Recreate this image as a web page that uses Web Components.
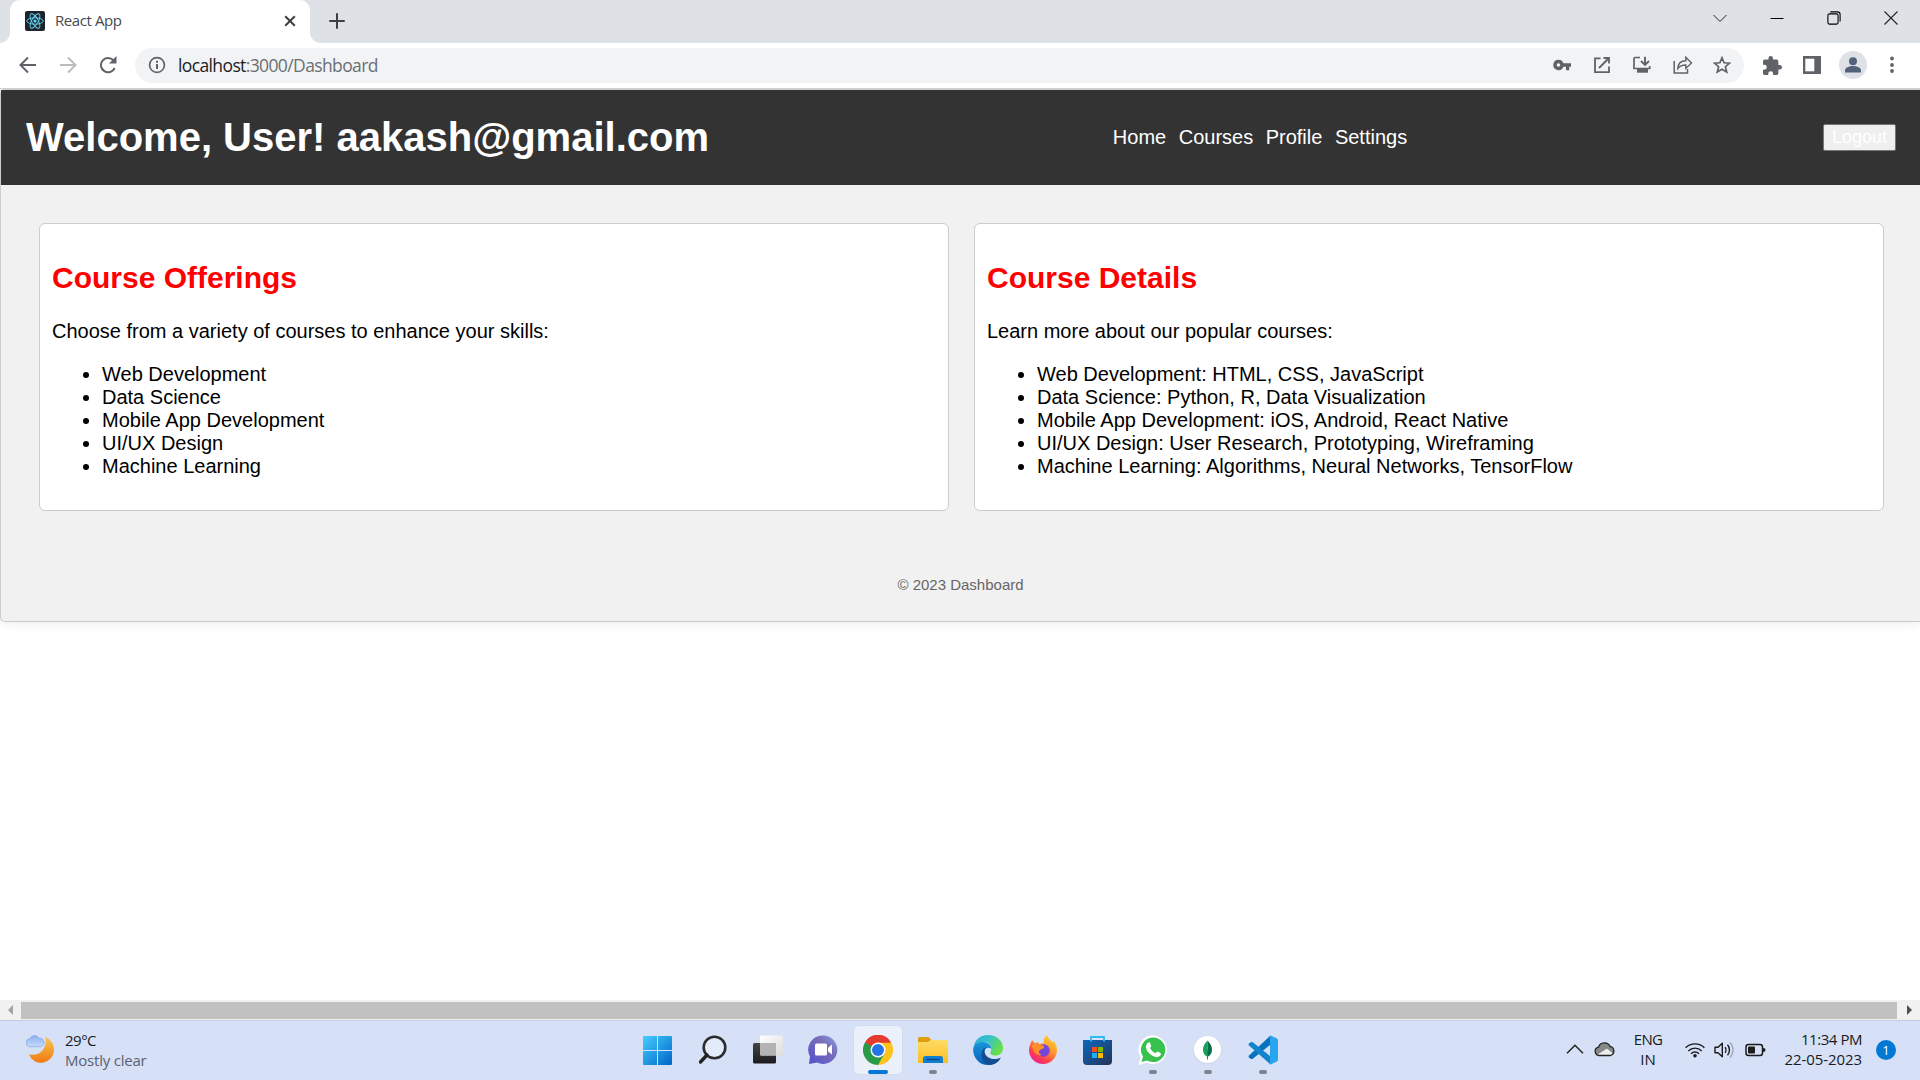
<!DOCTYPE html>
<html lang="en"><head><meta charset="utf-8"><title>React App</title>
<style>
html,body{margin:0;height:1080px;overflow:hidden;background:#fff}
body{font-family:"Liberation Sans",Arial,sans-serif}
</style></head><body>
<desktop-screen></desktop-screen>
<script>
const define=(name,css,html)=>customElements.define(name,class extends HTMLElement{
  constructor(){super();const t=document.createElement('template');
    t.innerHTML=`<style>*{box-sizing:border-box}${css}</style>${html}`;
    this.attachShadow({mode:'open'}).append(t.content.cloneNode(true));}
});

/* fixed-width text whose spacing is tuned per instance */
define('ui-text',`:host{display:block;white-space:nowrap;font-family:"Open Sans","Noto Sans",sans-serif}`,`<slot></slot>`);

const icons={
react:['0 0 20 20',20,20,`<rect width="20" height="20" rx="2" fill="#20232a"/><g fill="none" stroke="#61dafb" stroke-width=".9"><ellipse cx="10" cy="10" rx="8.2" ry="3.2"/><ellipse cx="10" cy="10" rx="8.2" ry="3.2" transform="rotate(60 10 10)"/><ellipse cx="10" cy="10" rx="8.2" ry="3.2" transform="rotate(120 10 10)"/></g><circle cx="10" cy="10" r="1.6" fill="#61dafb"/>`],
x:['0 0 12 12',12,12,`<path d="M1.2 1.2l9.6 9.6M10.8 1.2l-9.6 9.6" stroke="#3c4043" stroke-width="2"/>`],
plus:['0 0 16 16',16,16,`<path d="M8 1v14M1 8h14" stroke="#3c4043" stroke-width="2" stroke-linecap="round"/>`],
down:['0 0 14 14',14,14,`<path d="M.5 4L7 10.5 13.5 4" fill="none" stroke="#222" stroke-width="1"/>`],
min:['0 0 14 14',14,14,`<path d="M.5 7.5h13" stroke="#000"/>`],
max:['0 0 14 14',14,14,`<rect x=".9" y="2.9" width="10.2" height="10.2" rx="1.6" fill="none" stroke="#000" stroke-width="1.1"/><path d="M3.3.9h7.2a2.6 2.6 0 0 1 2.6 2.6v7" fill="none" stroke="#000" stroke-width="1.1"/>`],
close:['0 0 14 14',14,14,`<path d="M.5.5l13 13M13.5.5l-13 13" stroke="#222" stroke-width="1.1"/>`],
back:['0 0 18 18',18,18,`<path d="M17 9H2M9 1.5L1.5 9 9 16.5" fill="none" stroke="#5f6368" stroke-width="2"/>`],
fwd:['0 0 18 18',18,18,`<path d="M1 9h15M9 1.5L16.5 9 9 16.5" fill="none" stroke="#babcbe" stroke-width="2"/>`],
reload:['0 0 18 18',18,18,`<path d="M15.7 12A7.2 7.2 0 1 1 14.4 4.2" fill="none" stroke="#5f6368" stroke-width="2"/><path d="M17.5 0v7.5H10z" fill="#5f6368"/>`],
info:['0 0 18 18',18,18,`<circle cx="9" cy="9" r="7.4" fill="none" stroke="#5f6368" stroke-width="1.7"/><path d="M8 8h2v5H8zM8 4.8h2v2H8z" fill="#5f6368"/>`],
key:['0 0 18 12',18,12,`<path d="M5.5.8a5.2 5.2 0 1 0 4.9 7H13v3.4h3.2V7.8H18V4.2h-7.6A5.2 5.2 0 0 0 5.5.8zm0 3.4a1.8 1.8 0 1 1 0 3.6 1.8 1.8 0 0 1 0-3.6z" fill="#5f6368"/>`],
open:['0 0 16 16',16,16,`<path d="M6.5 1.3H1v13.9h14V9.5M9.5 1H15v5.5M15 1L5 11" fill="none" stroke="#5f6368" stroke-width="1.8"/>`],
install:['0 0 18 18',18,18,`<path d="M7 1.500H2.200A1.200 1.200 0 0 0 1 2.700v9.800h15.700V10" fill="none" stroke="#5f6368" stroke-width="1.700"/><path d="M12 .8V8M8 5l4 4 4-4" fill="none" stroke="#5f6368" stroke-width="1.9"/><path d="M4 13h11v3.7H4z" fill="#5f6368"/>`],
share:['0 0 20 18',20,18,`<path d="M1.2 5v12h13.3v-4" fill="none" stroke="#5f6368" stroke-width="1.5"/><path d="M4.8 12.5c.3-5 3.5-7.7 8-7.7V1.2L18.5 7l-5.7 5.4V9c-3.5 0-6 .8-8 3.5z" fill="none" stroke="#5f6368" stroke-width="1.4"/>`],
star:['0 0 18 18',18,18,`<path d="M9 1.8l2.1 5 5.4.4-4.1 3.5 1.3 5.3L9 13.2 4.3 16l1.3-5.3L1.5 7.2l5.4-.4z" fill="none" stroke="#5f6368" stroke-width="1.7"/>`],
puzzle:['2 1 21 21',19,19,`<path d="M20.5 11H19V7a2 2 0 0 0-2-2h-4V3.5a2.5 2.5 0 0 0-5 0V5H4a2 2 0 0 0-2 2v3.8h1.5a2.7 2.7 0 0 1 0 5.4H2V20c0 1.100.9 2 2 2h3.800v-1.500a2.700 2.700 0 0 1 5.400 0V22H17a2 2 0 0 0 2-2v-4h1.500a2.500 2.500 0 0 0 0-5z" fill="#5f6368"/>`],
panel:['0 0 18 18',18,18,`<path d="M0 0h18v18H0z" fill="#5f6368"/><path d="M2.300 2.700h9v12.600h-9z" fill="#fff"/>`],
avatar:['0 0 28 28',28,28,`<circle cx="14" cy="14" r="14" fill="#dee1e6"/><circle cx="14" cy="10.200" r="4" fill="#54617a"/><path d="M6 21.500v-2c0-3 4-4.500 8-4.500s8 1.500 8 4.500v2z" fill="#54617a"/>`],
dots:['0 0 4 18',4,18,`<g fill="#5f6368"><circle cx="2" cy="2.500" r="1.900"/><circle cx="2" cy="9" r="1.900"/><circle cx="2" cy="15" r="1.900"/></g>`],
moon:['0 0 30 30',30,30,`<defs><linearGradient id="m" x2="0" y2="1"><stop stop-color="#f9c650"/><stop offset="1" stop-color="#f07a12"/></linearGradient><linearGradient id="c" x2="0" y2="1"><stop stop-color="#8bb0ee"/><stop offset="1" stop-color="#c6dbfa"/></linearGradient></defs><path d="M19.500 2C24.500 4 28 9 28 14.500A13 13 0 0 1 2.800 19.300C13 22 21.500 14 19.500 2z" fill="url(#m)"/><path d="M4.500 11.700a4 4 0 0 1-.5-8A5 5 0 0 1 13 3.200 4.300 4.300 0 0 1 14.500 11.700z" fill="url(#c)" stroke="#7fa4e3" stroke-width=".7"/>`],
win:['0 0 30 30',30,30,`<defs><linearGradient id="w" gradientUnits="userSpaceOnUse" x2="29" y2="29"><stop stop-color="#48d0ff"/><stop offset="1" stop-color="#0067c8"/></linearGradient></defs><path d="M1 1h13v14H0V2a1 1 0 0 1 1-1zM15 1h13a1 1 0 0 1 1 1v13H15zM0 16h14v14H1a1 1 0 0 1-1-1zM15 16h14v13a1 1 0 0 1-1 1H15z" fill="url(#w)"/>`],
search:['0 0 30 30',30,30,`<circle cx="16.500" cy="12.500" r="10.800" fill="#eef2fb" fill-opacity=".55" stroke="#2b2b2b" stroke-width="2.600"/><path d="M9 20l-6.500 7" stroke="#222" stroke-width="3.400" stroke-linecap="round"/>`],
task:['0 0 30 30',30,30,`<defs><linearGradient id="t" x2="0" y2="1"><stop stop-color="#454545"/><stop offset="1" stop-color="#1b1b1b"/></linearGradient><linearGradient id="u" x2="1" y2="1"><stop stop-color="#fff"/><stop offset="1" stop-color="#dcdcdc"/></linearGradient></defs><rect y="8" width="23" height="20.500" rx="1.500" fill="url(#t)"/><rect x="7" y=".5" width="23" height="20" rx="1.500" fill="url(#u)"/><path d="M7 8h16v12.500H8.500A1.500 1.500 0 0 1 7 19z" fill="#b3b3b3"/>`],
chat:['0 0 30 30',30,30,`<defs><linearGradient id="h" x1="1" x2="0" y2="1"><stop stop-color="#83a8f3"/><stop offset=".35" stop-color="#7b6fb8"/><stop offset="1" stop-color="#5451cc"/></linearGradient></defs><path d="M15 .5a14.200 14.200 0 1 1-6 27L1 29l1-7.500A14.200 14.200 0 0 1 15 .5z" fill="url(#h)"/><rect x="7" y="8.500" width="12" height="12" rx="1.500" fill="#fff"/><path d="M20 13l4-3.500v10L20 16.500z" fill="#fff"/>`],
chrome:['0 0 48 48',30,30,`<path d="M24 24L3.200 12A24 24 0 0 1 44.800 12z" fill="#e33b2e"/><path d="M24 24L44.800 12A24 24 0 0 1 24 48z" fill="#fcc31e"/><path d="M24 24L24 48A24 24 0 0 1 3.200 12z" fill="#2a9a48"/><path d="M24 12h20.800L34.400 30z" fill="#fcc31e"/><path d="M34.400 30L24 48 13.600 30z" fill="#2a9a48"/><path d="M3.200 12A24 24 0 0 1 44.800 12H24L13.600 18z" fill="#e33b2e"/><path d="M3.200 12L13.600 30V18z" fill="#2a9a48"/><circle cx="24" cy="24" r="12" fill="#fff"/><circle cx="24" cy="24" r="9.600" fill="#2374e8"/>`],
folder:['0 0 30 28',30,28,`<defs><linearGradient id="f" x2="0" y2="1"><stop stop-color="#ffdc65"/><stop offset="1" stop-color="#fbbd26"/></linearGradient></defs><path d="M1.500 0h9l3 3v6H0V1.500A1.500 1.500 0 0 1 1.500 0z" fill="#df9e0c"/><path d="M0 5h10l3-2h15.500A1.500 1.500 0 0 1 30 4.500V26H0z" fill="url(#f)"/><path d="M5 26v-4.500a2.500 2.500 0 0 1 2.500-2.500h15a2.500 2.500 0 0 1 2.500 2.500V26z" fill="#117ed0"/><path d="M9 22.500h12" stroke="#0a4a8b" stroke-width="1.300" stroke-linecap="round"/>`],
edge:['0 0 30 30',30,30,`<defs><linearGradient id="e" x2="1" y2=".5"><stop stop-color="#2aa9df"/><stop offset=".5" stop-color="#35c4c7"/><stop offset="1" stop-color="#68df45"/></linearGradient><linearGradient id="g" x2="0" y2="1"><stop stop-color="#1996db"/><stop offset="1" stop-color="#0b5db7"/></linearGradient></defs><path d="M.5 12C2 4 8 0 15 0c9 0 15 6 15 13 0 5-3.500 7.500-7.500 7.500-3.500 0-6-1.500-5-3.500 3-5-1-10-6-10-5 0-9 2.500-11 5z" fill="url(#e)"/><path d="M.3 13C1.500 9.500 5 7 10 7c6 0 8.500 4 8.500 7-5-3.500-8 1-7 5 1 5 6.500 8.500 11.500 8-3 2.500-5.500 3-8 3C6 30-.8 22 .3 13z" fill="url(#g)"/><path d="M12.500 12.500C7 14.500 6.500 26 15 29.500c5 1.500 10.500-2 13-7-8 4-16 0-16.500-6 0-1.500.5-3 1-4z" fill="#104d93"/>`],
firefox:['0 0 30 30',30,30,`<defs><linearGradient id="x" x1=".9" x2=".2" y2="1"><stop stop-color="#ffe43a"/><stop offset=".4" stop-color="#ff9a2c"/><stop offset=".75" stop-color="#ff3b52"/><stop offset="1" stop-color="#e8209a"/></linearGradient></defs><path d="M1 15C1 11 3 8 4 5l3 3.500L10 7l1 2 5-1c-1-4 1-6 3-8 1 4 4 4 5.500 7.500L26 6c2 3 3 6 3 9A14 14 0 0 1 1 15z" fill="url(#x)"/><circle cx="15.500" cy="15.500" r="6.200" fill="#7646d8"/><path d="M4 10c5-3 8 0 12 1 1 2-2 3-4 4-2 2-1 4 2 5-5 1-10-3-10-10z" fill="#ff8e2b"/>`],
store:['0 0 30 30',30,30,`<defs><linearGradient id="s" x2="1" y2="1"><stop stop-color="#0b67bd"/><stop offset="1" stop-color="#253457"/></linearGradient></defs><path d="M0 4h29v21a4 4 0 0 1-4 4H4a4 4 0 0 1-4-4z" fill="url(#s)"/><path d="M8 5.500V1h13v4.500" fill="none" stroke="#2fbcf3" stroke-width="1.800"/><path d="M9 11h5v5H9z" fill="#f25022"/><path d="M15 11h5v5h-5z" fill="#7fba00"/><path d="M9 17h5v5H9z" fill="#1daff0"/><path d="M15 17h5v5h-5z" fill="#ffb900"/>`],
wa:['0 0 30 30',30,30,`<path d="M15 .3a14.400 14.400 0 1 1-6.500 27.500L.3 30l2.300-8A14.400 14.400 0 0 1 15 .3z" fill="#fff"/><path d="M15 2.500a12.300 12.300 0 1 1-6 23L3.500 27 5 21.500A12.300 12.300 0 0 1 15 2.500z" fill="#36c24d"/><path d="M9.700 8c1-1 2-1 2.500.3l1 2.500c.3.800-.6 1.500-1.200 2.200 1.500 2.700 3 4 5.500 5.200.8-.6 1.500-2 2.300-1.600l2.600 1.300c1 .6.500 2.200-.5 3.100-2 1.800-4.500 1.300-7.500-.3-3-1.700-5.400-4.500-6.200-7-.7-2.300 0-4.200 1.500-5.700z" fill="#fff"/>`],
mongo:['0 0 30 30',30,30,`<circle cx="14.500" cy="15" r="14" fill="#c6cbd5" opacity=".55"/><circle cx="14.500" cy="14.500" r="13.600" fill="#fff"/><path d="M14.500 5.500c-3 3-4.500 6-4.500 9 0 4 2 6 4.500 7.500z" fill="#12a05a"/><path d="M14.500 5.500c3 3 4.500 6 4.500 9 0 4-2 6-4.500 7.500z" fill="#0b6b48"/><path d="M14.500 15v9.500" stroke="#337a5e"/>`],
code:['0 0 30 30',30,30,`<path d="M22 1L1 20.500a1.500 1.500 0 0 0 0 2l2 1.500h1.500L22 10z" fill="#0873bd"/><path d="M22 29L1 10.500a1.500 1.500 0 0 1 0-2L3 7h1.500L22 21z" fill="#1283cd"/><path d="M22 .3l6.500 3A2.500 2.500 0 0 1 30 5.500v19a2.500 2.500 0 0 1-1.500 2.200L22 29.800z" fill="#29a4ef"/>`],
up:['0 0 18 12',18,12,`<path d="M1 10.300l8-8 8 8" fill="none" stroke="#222" stroke-width="1.500"/>`],
cloud:['0 0 22 16',22,16,`<path d="M5 14.500a4.200 4.200 0 0 1-.5-8.300 6.300 6.300 0 0 1 11.600-.8A4.700 4.700 0 0 1 16.500 14.500z" fill="#888"/><path d="M3 14l10-6.500 6.500 5.500-3 1.500H5z" fill="#eee"/><path d="M5 14.500a4.200 4.200 0 0 1-.5-8.300 6.300 6.300 0 0 1 11.600-.8A4.700 4.700 0 0 1 16.500 14.500z" fill="none" stroke="#222" stroke-width="1.300"/>`],
wifi:['0 0 20 16',20,16,`<g fill="none" stroke="#1b1b1b" stroke-width="1.400"><path d="M.6 5.800a13.300 13.300 0 0 1 18.800 0M3.300 8.900a9.500 9.500 0 0 1 13.400 0M6 11.700a5.600 5.600 0 0 1 8 0"/></g><circle cx="10" cy="13.800" r="1.800" fill="#1b1b1b"/>`],
sound:['0 0 20 18',20,18,`<g fill="none" stroke="#1b1b1b" stroke-width="1.400" stroke-linejoin="round"><path d="M1 6.300v5.400h3l4.300 4V2.300l-4.300 4zM11 6.200c1.300 1.500 1.300 4.100 0 5.600M13.500 3.800c2.600 2.800 2.600 7.600 0 10.400"/><path d="M16 1.500c4 4 4 11 0 15" stroke="#9fabc2"/></g>`],
battery:['0 0 21 14',21,14,`<rect x="1" y="1.500" width="16.500" height="11" rx="2.500" fill="none" stroke="#1b1b1b" stroke-width="1.500"/><rect x="3" y="3.500" width="7" height="7" rx="1" fill="#1b1b1b"/><path d="M18 5.300h1.300a1 1 0 0 1 1 1v1.400a1 1 0 0 1-1 1H18z" fill="#1b1b1b"/>`],
tl:['0 0 5 10',5,10,`<path d="M5 0v10L0 5z" fill="#a3a3a3"/>`],
tr:['0 0 5 10',5,10,`<path d="M0 0v10l5-5z" fill="#505050"/>`]
};
customElements.define('ui-icon',class extends HTMLElement{
  constructor(){super();this.attachShadow({mode:'open'});}
  connectedCallback(){const i=icons[this.getAttribute('name')];
    this.shadowRoot.innerHTML=`<style>:host{display:block;flex:none;width:${i[1]}px;height:${i[2]}px}svg{display:block}</style><svg width="${i[1]}" height="${i[2]}" viewBox="${i[0]}">${i[3]}</svg>`;}
});

define('tab-strip',`
:host{display:flex;height:43px;background:#dee1e6;padding-left:10px}
.tab{width:300px;height:43px;background:#fff;border-radius:10px 10px 0 0;display:flex;align-items:center;padding:0 14px 0 15px;position:relative}
.tab::before,.tab::after{content:"";position:absolute;bottom:0;width:10px;height:10px}
.tab::before{left:-10px;background:radial-gradient(circle at 0 0,#dee1e6 9.5px,#fff 10px)}
.tab::after{right:-10px;background:radial-gradient(circle at 100% 0,#dee1e6 9.5px,#fff 10px)}
.tab ui-icon{margin-top:-1px}
.tab ui-text{margin:-4px auto 0 10px;font-size:15px;color:#45494d;letter-spacing:-.42px}
.plus{margin:13px auto 0 19px}
.win{display:flex;gap:43px;padding:11px 22px 0 0}`,
`<div class="tab"><ui-icon name="react"></ui-icon><ui-text>React App</ui-text><ui-icon name="x"></ui-icon></div>
<ui-icon class="plus" name="plus"></ui-icon>
<div class="win"><ui-icon name="down"></ui-icon><ui-icon name="min"></ui-icon><ui-icon name="max"></ui-icon><ui-icon name="close"></ui-icon></div>`);

define('tool-bar',`
:host{display:flex;height:46px;background:#fff;border-bottom:1px solid #cfd0d2;align-items:center;padding:0 26px 1px 19px}
.nav{display:flex;gap:22px;align-items:center;margin-right:18px}
.url{flex:1;height:35px;border-radius:18px;background:#f1f3f4;display:flex;align-items:center;padding:0 13px 0 13px;color:#6b6f73}
.url ui-text{font-size:17.5px;letter-spacing:-.62px;margin:-1px auto 0 12px}
b{font-weight:400;color:#202124}
.in{display:flex;align-items:center;gap:23px}
.out{display:flex;align-items:center;margin-left:19px}`,
`<div class="nav"><ui-icon name="back"></ui-icon><ui-icon name="fwd"></ui-icon><ui-icon name="reload"></ui-icon></div>
<div class="url"><ui-icon name="info"></ui-icon><ui-text><b>localhost</b>:3000/Dashboard</ui-text>
<div class="in"><ui-icon name="key"></ui-icon><ui-icon name="open"></ui-icon><ui-icon name="install"></ui-icon><ui-icon name="share" style="margin-left:-1px"></ui-icon><ui-icon name="star" style="margin-left:-3px"></ui-icon></div></div>
<div class="out"><ui-icon name="puzzle"></ui-icon><ui-icon name="panel" style="margin-left:21px"></ui-icon><ui-icon name="avatar" style="margin-left:18px"></ui-icon><ui-icon name="dots" style="margin-left:23px"></ui-icon></div>`);

define('dash-header',`
:host{display:flex;justify-content:space-between;align-items:center;height:95px;background:#333;color:#fff;padding:0 24px 0 25px}
h1{margin:0 0 2px;font-size:40px;line-height:46px}
nav{display:flex;gap:12.5px;font-size:20px;line-height:23px;margin-right:12px}
button{font:18px/23px "Liberation Sans",Arial,sans-serif;color:#fff;background:#efefef;border:1px solid #767676;border-radius:2px;padding:1px 8px;height:27px;width:73px;display:flex;justify-content:center}`,
`<h1>Welcome, User! aakash@gmail.com</h1><nav><span>Home</span><span>Courses</span><span>Profile</span><span>Settings</span></nav><button>Logout</button>`);

define('course-card',`
:host{display:block;flex:1;height:288px;border:1px solid #ccc;border-radius:6px;background:#fff;padding:12px;color:#000;font-size:20px;line-height:23px}
h2{margin:25px 0 25px;font-size:30px;line-height:34px;color:red}
p{margin:0 0 20px}
ul{margin:0;padding-left:50px}`,
`<h2><slot name="title"></slot></h2><p><slot name="lead"></slot></p><ul><slot></slot></ul>`);

define('dash-page',`
:host{display:block;height:911px;background:#fff;overflow:hidden}
.box{height:533px;border:1px solid #ccc;border-right:0;border-radius:5px 0 0 5px;background:#f1f1f1;box-shadow:0 0 12px rgba(0,0,0,.1)}
.cards{display:flex;gap:25px;padding:38px 36px 0 38px}
footer{margin-top:64px;text-align:center;font-size:15px;line-height:19px;color:#666}
li{line-height:23px}`,
`<div class="box"><dash-header></dash-header>
<div class="cards">
<course-card><span slot="title">Course Offerings</span><span slot="lead">Choose from a variety of courses to enhance your skills:</span><li>Web Development</li><li>Data Science</li><li>Mobile App Development</li><li>UI/UX Design</li><li>Machine Learning</li></course-card>
<course-card><span slot="title">Course Details</span><span slot="lead">Learn more about our popular courses:</span><li>Web Development: HTML, CSS, JavaScript</li><li>Data Science: Python, R, Data Visualization</li><li>Mobile App Development: iOS, Android, React Native</li><li>UI/UX Design: User Research, Prototyping, Wireframing</li><li>Machine Learning: Algorithms, Neural Networks, TensorFlow</li></course-card>
</div><footer>© 2023 Dashboard</footer></div>`);

define('scroll-bar',`
:host{display:flex;height:20px;background:#f1f1f1;align-items:center;padding:0 8px;gap:8px}
div{flex:1;height:17px;background:#c1c1c1;margin-top:1px}`,
`<ui-icon name="tl"></ui-icon><div></div><ui-icon name="tr" style="margin-left:2px"></ui-icon>`);

define('task-app',`
:host{display:flex;flex-direction:column;align-items:center;width:48px;height:48px;padding-top:9px;border-radius:5px;position:relative}
:host([active]){background:#ebf0fb;box-shadow:0 0 1px 1px #d3dcee}
i{position:absolute;bottom:0;width:8px;height:4px;border-radius:2px;background:#7c838f;display:none}
:host([running]) i{display:block}
:host([active]) i{display:block;width:20px;background:#0078d4}`,
`<slot></slot><i></i>`);

define('task-bar',`
:host{display:flex;height:60px;background:#d6e0f7;border-top:1px solid #c2cce4;color:#1b1b1b;position:relative}
.weather{display:flex;padding:14px 0 0 26px;gap:9px;width:634px}
.weather ui-text{line-height:20px;font-size:15px;margin-top:-5px}
.weather span{color:#5b6270}
.apps{display:flex;gap:7px;padding-top:5px}
.tray{display:flex;margin-left:auto;padding-right:24px}
.two{line-height:20px;font-size:15px;padding-top:8px}`,
`<div class="weather"><ui-icon name="moon"></ui-icon><ui-text><div style="letter-spacing:-.5px">29°C</div><span style="letter-spacing:-.22px">Mostly clear</span></ui-text></div>
<div class="apps">
<task-app><ui-icon name="win"></ui-icon></task-app><task-app><ui-icon name="search"></ui-icon></task-app><task-app><ui-icon name="task"></ui-icon></task-app><task-app><ui-icon name="chat"></ui-icon></task-app><task-app active><ui-icon name="chrome"></ui-icon></task-app><task-app running><ui-icon name="folder" style="margin-top:2px"></ui-icon></task-app><task-app><ui-icon name="edge"></ui-icon></task-app><task-app><ui-icon name="firefox"></ui-icon></task-app><task-app><ui-icon name="store" style="margin-top:1px"></ui-icon></task-app><task-app running><ui-icon name="wa"></ui-icon></task-app><task-app running><ui-icon name="mongo"></ui-icon></task-app><task-app running><ui-icon name="code"></ui-icon></task-app></div>
<div class="tray"><ui-icon name="up" style="margin-top:22px"></ui-icon><ui-icon name="cloud" style="margin:20px 0 0 10px"></ui-icon>
<ui-text class="two" style="margin-left:17px;width:30px;text-align:center"><div style="letter-spacing:-.7px">ENG</div><div>IN</div></ui-text>
<ui-icon name="wifi" style="margin:21px 0 0 22px"></ui-icon><ui-icon name="sound" style="margin:20px 0 0 9px"></ui-icon><ui-icon name="battery" style="margin:22px 0 0 11px"></ui-icon>
<ui-text class="two" style="margin-left:17px;width:79px;display:flex;flex-direction:column;align-items:flex-end"><span style="letter-spacing:-.45px">11:34 PM</span><span style="letter-spacing:-.08px">22-05-2023</span></ui-text>
<ui-text style="margin:19px 0 0 14px;width:20px;height:20px;border-radius:10px;background:#0078d4;color:#fff;font-size:13px;line-height:20px;text-align:center">1</ui-text></div>`);

define('desktop-screen',`:host{display:flex;flex-direction:column;width:1920px;height:1080px}`,
`<tab-strip></tab-strip><tool-bar></tool-bar><dash-page></dash-page><scroll-bar></scroll-bar><task-bar></task-bar>`);
</script></body></html>
